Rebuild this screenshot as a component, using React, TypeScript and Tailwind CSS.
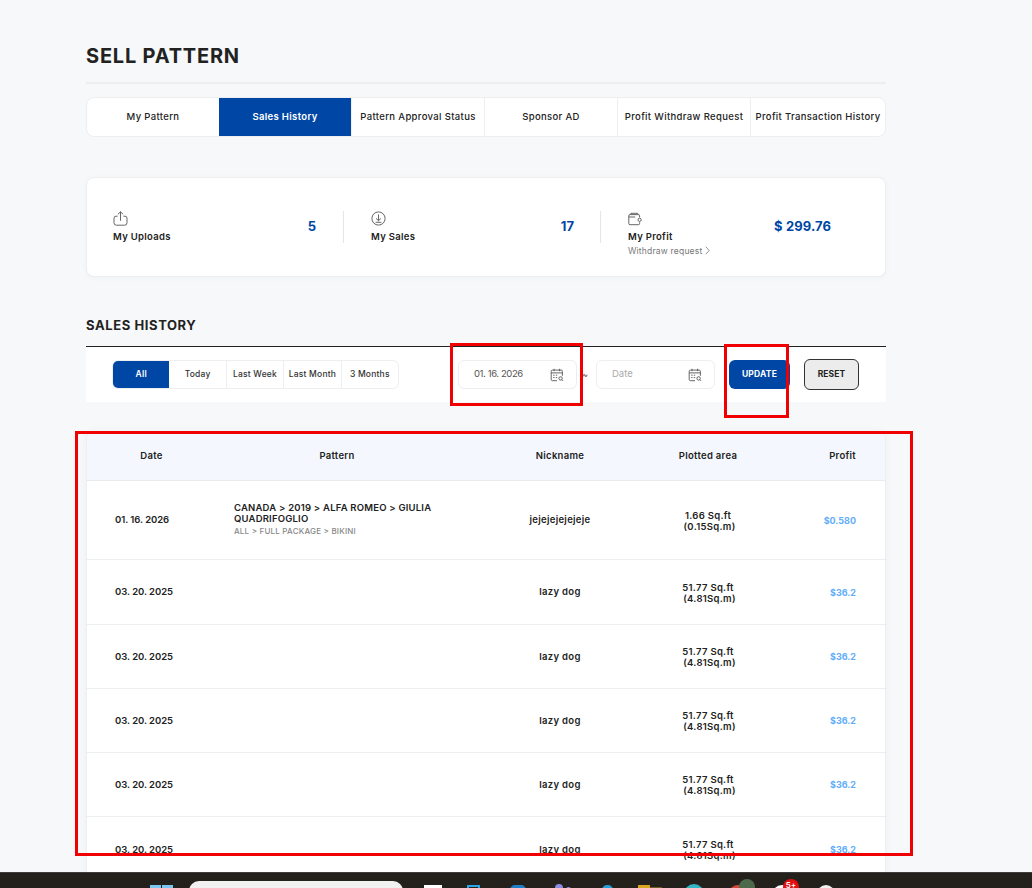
const tabs = ["My Pattern", "Sales History", "Pattern Approval Status", "Sponsor AD", "Profit Withdraw Request", "Profit Transaction History"];
const ranges = ["All", "Today", "Last Week", "Last Month", "3 Months"];

const rows = [
  { date: "01. 16. 2026", nick: "jejejejejejeje", area: "1.66 Sq.ft", metric: "(0.15Sq.m)", profit: "$0.580", h: "h-[79px]", first: true },
  { date: "03. 20. 2025", nick: "lazy dog", area: "51.77 Sq.ft", metric: "(4.81Sq.m)", profit: "$36.2", h: "h-[65px]" },
  { date: "03. 20. 2025", nick: "lazy dog", area: "51.77 Sq.ft", metric: "(4.81Sq.m)", profit: "$36.2", h: "h-[64px]" },
  { date: "03. 20. 2025", nick: "lazy dog", area: "51.77 Sq.ft", metric: "(4.81Sq.m)", profit: "$36.2", h: "h-[64px]" },
  { date: "03. 20. 2025", nick: "lazy dog", area: "51.77 Sq.ft", metric: "(4.81Sq.m)", profit: "$36.2", h: "h-[64px]" },
  { date: "03. 20. 2025", nick: "lazy dog", area: "51.77 Sq.ft", metric: "(4.81Sq.m)", profit: "$36.2", h: "h-[66px]" },
];

const gridCols = "grid grid-cols-[129px_242px_204px_92px_1fr] items-center";

function CalendarIcon() {
  return (
    <svg width="14" height="14" viewBox="0 0 14 14" fill="none" stroke="#555" strokeWidth="0.9">
      <path d="M7 12.7H2.5a1.3 1.3 0 0 1-1.3-1.3V3.4a1.3 1.3 0 0 1 1.3-1.3h8.6a1.3 1.3 0 0 1 1.3 1.3v4.4" />
      <path d="M1.2 4.9h11.2M4 .8v2.4M9.6.8v2.4M3.2 7.2h1.4M5.8 7.2h1.4M3.2 9.6h1.4M5.8 9.6h1.4" />
      <circle cx="10.6" cy="10.4" r="1.7" />
      <path d="M11.9 11.7l1.2 1.2" />
    </svg>
  );
}

function UploadIcon() {
  return (
    <svg width="15" height="15" viewBox="0 0 15 15" fill="none" stroke="#555" strokeWidth="0.9">
      <path d="M4.6 5.2H3a2 2 0 0 0-2 2v4.6a2.4 2.4 0 0 0 2.4 2.4h8.2a2.4 2.4 0 0 0 2.4-2.4V7.2a2 2 0 0 0-2-2h-1.6" />
      <path d="M7.5 9.8V.8M4.9 3.3L7.5.8l2.6 2.5" />
    </svg>
  );
}

function DownloadIcon() {
  return (
    <svg width="15" height="15" viewBox="0 0 15 15" fill="none" stroke="#555" strokeWidth="0.9">
      <circle cx="7.5" cy="7.5" r="6.6" />
      <path d="M7.5 3.4v6.2M5 7.4l2.5 2.3L10 7.4M4.6 11.3h5.8" />
    </svg>
  );
}

function WalletIcon() {
  return (
    <svg width="14" height="14" viewBox="0 0 14 14" fill="none" stroke="#555" strokeWidth="0.9">
      <path d="M11.6 5.4V3.8a1.2 1.2 0 0 0-1.2-1.2H2a1.2 1.2 0 0 0-1.2 1.2v7.7A1.2 1.2 0 0 0 2 12.7h8.4a1.2 1.2 0 0 0 1.2-1.2v-1.3" />
      <path d="M2.2 2.6l.8-1.3h6.6l.8 1.3M.8 5h6.4" />
      <circle cx="11.6" cy="7.8" r="1.6" />
    </svg>
  );
}

export default function App() {
  return (
    <div className="relative flex h-[888px] flex-col overflow-hidden bg-[#f7f8fa] font-['Inter',sans-serif] text-[#222]">
      <main className="min-h-0 flex-1 overflow-hidden">
        <div className="ml-[86px] w-[800px] pt-[44px]">
          <h1 className="h-[24px] text-[20px] font-bold leading-[24px] tracking-[0.8px] text-[#222]">SELL PATTERN</h1>
          <div className="mt-[14px] h-[2px] bg-[#eceef0]" />

          <div className="mt-[13px] flex h-[40px] overflow-hidden rounded-lg border border-[#eceef0] bg-white">
            {tabs.map((t, i) => (
              <div
                key={t}
                className={`flex items-center justify-center whitespace-nowrap text-[9.5px] font-medium tracking-[0.35px] ${i === 5 ? "w-[135px] flex-none" : "flex-1"} ${i === 1 ? "bg-[#0047a5] font-semibold text-white" : "text-[#222]"} ${i > 1 ? "border-l border-[#eceef0]" : ""}`}
              >
                {t}
              </div>
            ))}
          </div>

          <div className="mt-[40px] flex h-[100px] items-center rounded-lg border border-[#eceef0] bg-white pl-[26px] shadow-[0_1px_6px_rgba(0,0,0,0.03)]">
            <div className="flex h-[32px] w-[231px] items-center justify-between border-r border-[#e6e6e6] pr-[27px]">
              <div className="flex flex-col">
                <UploadIcon />
                <span className="mt-[5px] text-[9.5px] font-semibold leading-[12px] tracking-[0.3px]">My Uploads</span>
              </div>
              <span className="text-[13px] font-bold text-[#0047a5]">5</span>
            </div>
            <div className="ml-[27px] flex h-[32px] w-[230px] items-center justify-between border-r border-[#e6e6e6] pr-[26px]">
              <div className="flex flex-col">
                <DownloadIcon />
                <span className="mt-[5px] text-[9.5px] font-semibold leading-[12px] tracking-[0.3px]">My Sales</span>
              </div>
              <span className="text-[13px] font-bold text-[#0047a5]">17</span>
            </div>
            <div className="ml-[27px] flex h-[32px] w-[203px] items-center justify-between">
              <div className="mt-[14px] flex flex-col">
                <WalletIcon />
                <span className="mt-[5px] text-[9.5px] font-semibold leading-[12px] tracking-[0.3px]">My Profit</span>
                <span className="mt-[2px] flex items-center gap-[3px] text-[8.5px] leading-[12px] tracking-[0.2px] text-[#777]">
                  Withdraw request
                  <svg width="5" height="9" viewBox="0 0 5 9" fill="none" stroke="#777" strokeWidth="0.8">
                    <path d="M.8.8l3.4 3.7L.8 8.2" />
                  </svg>
                </span>
              </div>
              <span className="text-[13px] font-bold tracking-[0.1px] text-[#0047a5]">$ 299.76</span>
            </div>
          </div>

          <h2 className="mt-[40px] h-[17px] text-[13px] font-bold leading-[17px] tracking-[0.6px]">SALES HISTORY</h2>
          <div className="mt-[12px] flex h-[56px] items-center border-t border-[#222] bg-white pl-[27px]">
            <div className="-ml-px flex h-[29px] w-[287px] overflow-hidden rounded-md border border-[#eceef0]">
              {ranges.map((r, i) => (
                <div
                  key={r}
                  className={`flex flex-1 items-center justify-center whitespace-nowrap text-[8.5px] font-medium tracking-[0.2px] ${i === 0 ? "bg-[#0047a5] font-semibold text-white" : "text-[#333]"} ${i > 1 ? "border-l border-[#eceef0]" : ""}`}
                >
                  {r}
                </div>
              ))}
            </div>
            <div className="ml-[59px] flex h-[29px] w-[119px] items-center justify-between rounded-md border border-[#eceef0] pl-[15px] pr-[12px]">
              <span className="text-[9.5px] tracking-[-0.4px] text-[#555]">01. 16. 2026</span>
              <CalendarIcon />
            </div>
            <span className="ml-[5px] w-[14px] text-[9px] text-[#555]">~</span>
            <div className="flex h-[29px] w-[119px] items-center justify-between rounded-md border border-[#eceef0] pl-[15px] pr-[12px]">
              <span className="text-[9.5px] text-[#aaa]">Date</span>
              <CalendarIcon />
            </div>
            <button className="ml-[14px] h-[29px] w-[61px] rounded-md bg-[#0047a5] text-[8.5px] font-bold tracking-[0.2px] text-white">UPDATE</button>
            <button className="ml-[14px] h-[31px] w-[55px] rounded-md border border-[#333] bg-[#ececec] text-[8.5px] font-bold tracking-[0.1px] text-[#222]">RESET</button>
          </div>

          <div className="mt-[29px] overflow-hidden rounded-t-lg border-x border-t border-[#eceef0] bg-white shadow-[0_0_8px_rgba(0,0,0,0.04)]">
            <div className={`${gridCols} h-[49px] border-b border-[#e8eaed] bg-[#f4f7fd] text-[9.5px] font-semibold tracking-[0.3px]`}>
              <span className="text-center">Date</span>
              <span className="text-center">Pattern</span>
              <span className="text-center">Nickname</span>
              <span className="text-center">Plotted area</span>
              <span className="pr-[29px] text-right">Profit</span>
            </div>
            {rows.map((row, i) => (
              <div key={i} className={`${gridCols} ${row.h} border-b border-[#eceef0] pt-[1px] text-[9.5px] font-semibold tracking-[0.3px]`}>
                <span className="pl-[28px] tracking-[-0.05px]">{row.date}</span>
                <div className="pl-[18px] pr-[10px]">
                  {row.first && (
                    <div className="-mt-[2px]">
                      <div className="text-[9.5px] font-semibold leading-[11px] tracking-[0.2px]">CANADA &gt; 2019 &gt; ALFA ROMEO &gt; GIULIA QUADRIFOGLIO</div>
                      <div className="mt-[1px] text-[8px] font-medium leading-[12px] tracking-[0.2px] text-[#888]">ALL &gt; FULL PACKAGE &gt; BIKINI</div>
                    </div>
                  )}
                </div>
                <span className="text-center">{row.nick}</span>
                <span className="text-center leading-[11px]">
                  {row.area}
                  <br />
                  <span className="ml-[3px]">{row.metric}</span>
                </span>
                <span className="pr-[29px] text-right text-[9px] font-bold tracking-[0px] text-[#5fadfb]">{row.profit}</span>
              </div>
            ))}
          </div>
        </div>
      </main>

      <footer className="relative h-[16px] shrink-0 overflow-hidden border-t border-[#3d3d3d] bg-[#24211d]">
        <div className="absolute left-[150px] top-[12px] grid grid-cols-2 gap-[1px]">
          <span className="h-[11px] w-[11px] bg-[#7cc6f2]" />
          <span className="h-[11px] w-[11px] bg-[#7cc6f2]" />
        </div>
        <div className="absolute left-[189px] top-[8px] h-[20px] w-[214px] rounded-full bg-[#f1f1f1]" />
        <div className="absolute left-[424px] top-[12px] h-[10px] w-[18px] bg-white" />
        <div className="absolute left-[467px] top-[12px] h-[10px] w-[13px] border-2 border-[#2aa5e6]" />
        <div className="absolute left-[510px] top-[12px] h-[10px] w-[16px] rounded-full bg-[#1d7fc9]" />
        <div className="absolute left-[555px] top-[11px] h-[8px] w-[8px] rounded-full bg-[#8c8ce0]" />
        <div className="absolute left-[566px] top-[14px] h-[6px] w-[5px] rounded-full bg-[#8c8ce0]" />
        <div className="absolute left-[602px] top-[12px] h-[10px] w-[11px] rounded-full bg-[#2a9fd6]" />
        <div className="absolute left-[638px] top-[12px] h-[10px] w-[12px] bg-[#d9a520]" />
        <div className="absolute left-[650px] top-[14px] h-[10px] w-[12px] bg-[#6b5a22]" />
        <div className="absolute left-[684px] top-[11px] h-[20px] w-[20px] rounded-full bg-[#2fb8c4]" />
        <div className="absolute left-[728px] top-[12px] h-[20px] w-[20px] rounded-full bg-[#d8453a]" />
        <div className="absolute left-[739px] top-[6px] h-[16px] w-[16px] rounded-full bg-[#4c6a4a]" />
        <div className="absolute left-[772px] top-[12px] h-[20px] w-[20px] rounded-full bg-white" />
        <div className="absolute left-[783px] top-[6px] flex h-[16px] w-[16px] items-start justify-center rounded-full bg-[#e01010] pt-[2px] text-[8px] font-semibold leading-none text-white">5+</div>
        <div className="absolute left-[817px] top-[12px] h-[20px] w-[18px] rounded-full bg-[#f1f1f1]" />
      </footer>

      {/* red review marks drawn over the page */}
      <div className="pointer-events-none absolute left-[450px] top-[343px] h-[63px] w-[133px] border-[3px] border-[#f00000]" />
      <div className="pointer-events-none absolute left-[724px] top-[344px] h-[74px] w-[65px] border-[3px] border-[#f00000]" />
      <div className="pointer-events-none absolute left-[75px] top-[431px] h-[425px] w-[838px] border-[3px] border-[#f00000]" />
    </div>
  );
}
